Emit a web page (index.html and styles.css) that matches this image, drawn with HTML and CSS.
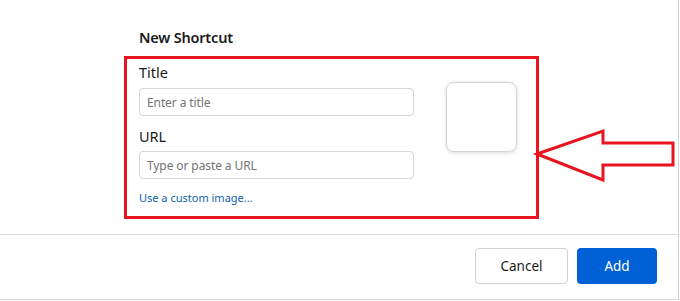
FILE: index.html
```html
<!DOCTYPE html>
<html lang="en">
<head>
    <meta charset="UTF-8">
    <title>New Shortcut</title>
    <link rel="stylesheet" href="styles.css">
</head>
<body>
    <div class="dialog">
        <section class="dialog-body">
            <h2 class="dialog-title">New Shortcut</h2>
            <div class="shortcut-form">
                <div class="fields">
                    <label class="field-label" for="titleInput">Title</label>
                    <input type="text" id="titleInput" class="field-input" placeholder="Enter a title">
                    <label class="field-label url-label" for="urlInput">URL</label>
                    <input type="text" id="urlInput" class="field-input" placeholder="Type or paste a URL">
                    <a href="#" class="custom-image">Use a custom image...</a>
                </div>
                <div class="tile-preview"></div>
            </div>
        </section>
        <footer class="dialog-footer">
            <button class="btn btn-cancel">Cancel</button>
            <button class="btn btn-add">Add</button>
        </footer>
    </div>

    <!-- screenshot annotation -->
    <svg class="annotation" width="680" height="301" viewBox="0 0 680 301">
        <rect x="125.5" y="57.5" width="412" height="160" fill="none" stroke="#e8141f" stroke-width="3"/>
        <polygon points="537,154 603,131 603,143 673,143 673,165 603,165 603,180" fill="none" stroke="#e8141f" stroke-width="3" stroke-linejoin="miter"/>
    </svg>
</body>
</html>
```

FILE: styles.css
```css
body {
    margin: 0;
    font-family: 'Noto Sans', 'Open Sans', Arial, sans-serif;
    background-color: #fff;
    color: #1b1b1b;
    position: relative;
    width: 680px;
    height: 301px;
    overflow: hidden;
}

.dialog {
    width: 678px;
    height: 299px;
    border-right: 1px solid #d4d4d4;
    border-bottom: 1px solid #d4d4d4;
    display: flex;
    flex-direction: column;
}

.dialog-body {
    height: 235px;
    box-sizing: border-box;
    padding: 27px 0 0 139px;
    border-bottom: 1px solid #d8d8d8;
}

.dialog-title {
    margin: 0;
    font-size: 14.5px;
    line-height: 20px;
    font-weight: 600;
    letter-spacing: -0.2px;
}

.shortcut-form {
    display: flex;
    gap: 32px;
    margin-top: 15px;
}

.fields {
    width: 275px;
    display: flex;
    flex-direction: column;
}

.field-label {
    font-size: 14.5px;
    line-height: 20px;
    margin-bottom: 6px;
}

.url-label {
    margin-top: 10px;
    margin-bottom: 5px;
}

.field-input {
    height: 28px;
    box-sizing: border-box;
    border: 1px solid #d6d6d6;
    border-radius: 4px;
    padding: 0 7px;
    font-family: inherit;
    font-size: 12px;
    letter-spacing: -0.1px;
    color: #1b1b1b;
    outline: none;
}

.field-input::placeholder {
    color: #747474;
}

.custom-image {
    margin-top: 11px;
    font-size: 11px;
    line-height: 16px;
    color: #0b5fb3;
    text-decoration: none;
}

.tile-preview {
    width: 71px;
    height: 70px;
    margin-top: 20px;
    box-sizing: border-box;
    border: 1px solid #d4d4d4;
    border-radius: 8px;
    box-shadow: 0 1px 4px rgba(0, 0, 0, 0.14);
}

.dialog-footer {
    flex: 1;
    display: flex;
    justify-content: flex-end;
    align-items: flex-start;
    gap: 9px;
    padding: 13px 21px 0 0;
}

.btn {
    height: 36px;
    border-radius: 4px;
    font-family: inherit;
    font-size: 13.5px;
    cursor: pointer;
}

.btn-cancel {
    width: 93px;
    background-color: #fff;
    color: #1b1b1b;
    border: 1px solid #d1d1d1;
}

.btn-add {
    width: 80px;
    background-color: #0060d6;
    color: #fff;
    border: none;
}

.annotation {
    position: absolute;
    top: 0;
    left: 0;
    pointer-events: none;
}
```
